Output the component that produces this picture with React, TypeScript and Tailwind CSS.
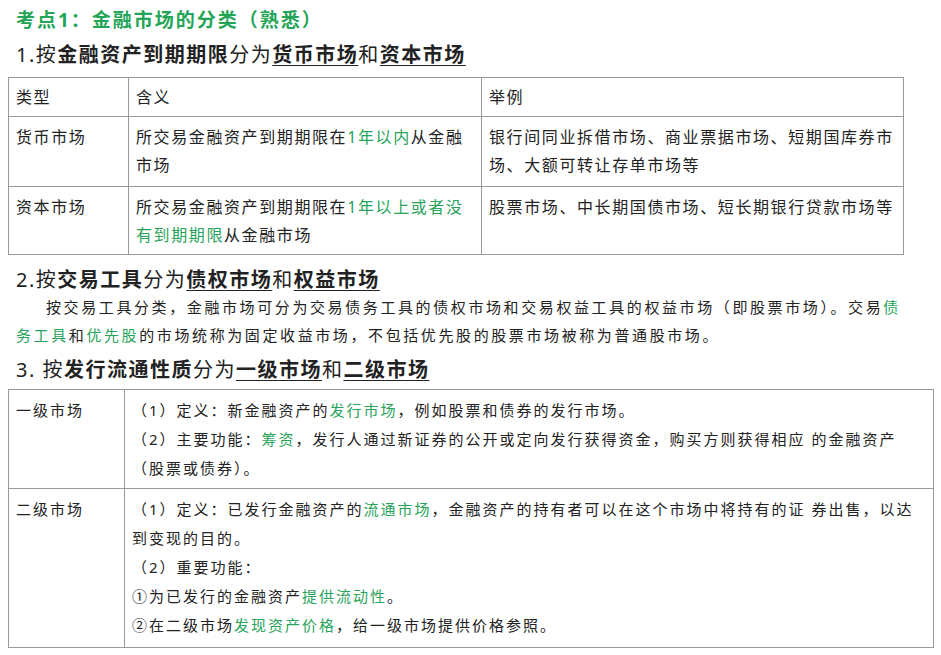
export default function App() {
  const G = ({ children }: { children: React.ReactNode }) => <span className="text-[#27a35a]">{children}</span>;
  const U = ({ children }: { children: React.ReactNode }) => <b className="underline underline-offset-[3px] decoration-1">{children}</b>;
  return (
    <div className="w-[941px] h-[655px] bg-white text-[#222] overflow-hidden" style={{ fontFamily: '"Noto Sans", "Noto Sans CJK SC", sans-serif' }}>
      <div className="pl-[16px] pt-[5px] h-[33px] text-[19px] font-bold text-[#22a556] leading-[30px] tracking-[2px]">考点1：金融市场的分类（熟悉）</div>
      <div className="pl-[16px] h-[44px] text-[20px] leading-[44px] tracking-[1.5px]">1.按<b>金融资产到期期限</b>分为<U>货币市场</U>和<U>资本市场</U></div>
      <table className="ml-[8px] w-[896px] border-collapse text-[16px] leading-[28px] tracking-[1.6px]">
        <colgroup><col className="w-[120px]" /><col className="w-[353px]" /><col /></colgroup>
        <tbody>
          <tr className="h-[39px]">
            <td className="border border-[#999] px-[7px] align-top pt-[5px]">类型</td>
            <td className="border border-[#999] px-[7px] align-top pt-[5px]">含义</td>
            <td className="border border-[#999] px-[7px] align-top pt-[5px]">举例</td>
          </tr>
          <tr className="h-[70px]">
            <td className="border border-[#999] px-[7px] align-top pt-[6px]">货币市场</td>
            <td className="border border-[#999] px-[7px] align-top pt-[6px]">所交易金融资产到期期限在<G>1年以内</G>从金融市场</td>
            <td className="border border-[#999] px-[7px] align-top pt-[6px]">银行间同业拆借市场、商业票据市场、短期国库券市场、大额可转让存单市场等</td>
          </tr>
          <tr className="h-[68px]">
            <td className="border border-[#999] px-[7px] align-top pt-[6px]">资本市场</td>
            <td className="border border-[#999] px-[7px] align-top pt-[6px]">所交易金融资产到期期限在<G>1年以上或者没有到期期限</G>从金融市场</td>
            <td className="border border-[#999] px-[7px] align-top pt-[6px]">股票市场、中长期国债市场、短长期银行贷款市场等</td>
          </tr>
        </tbody>
      </table>
      <div className="pl-[16px] h-[44px] pt-[6px] text-[20px] leading-[38px] tracking-[1.5px]">2.按<b>交易工具</b>分为<U>债权市场</U>和<U>权益市场</U></div>
      <p className="pl-[16px] text-[15px] leading-[28px] indent-[2em] mt-[-6px] w-[912px] tracking-[2.6px]">按交易工具分类，金融市场可分为交易债务工具的债权市场和交易权益工具的权益市场（即股票市场）。交易<G>债务工具</G>和<G>优先股</G>的市场统称为固定收益市场，不包括优先股的股票市场被称为普通股市场。</p>
      <div className="pl-[16px] h-[38px] text-[20px] leading-[38px] mt-[2px] tracking-[1.5px]">3. 按<b>发行流通性质</b>分为<U>一级市场</U>和<U>二级市场</U></div>
      <table className="ml-[8px] w-[926px] border-collapse text-[15px] leading-[29px] tracking-[2px]">
        <colgroup><col className="w-[116px]" /><col /></colgroup>
        <tbody>
          <tr className="h-[99px]">
            <td className="border border-[#999] px-[7px] align-top pt-[6px]">一级市场</td>
            <td className="border border-[#999] px-[7px] align-top pt-[6px]">
              <div>（1）定义：新金融资产的<G>发行市场</G>，例如股票和债券的发行市场。</div>
              <div>（2）主要功能：<G>筹资</G>，发行人通过新证券的公开或定向发行获得资金，购买方则获得相应 的金融资产（股票或债券）。</div>
            </td>
          </tr>
          <tr className="h-[159px]">
            <td className="border border-[#999] px-[7px] align-top pt-[6px]">二级市场</td>
            <td className="border border-[#999] px-[7px] align-top pt-[6px]">
              <div>（1）定义：已发行金融资产的<G>流通市场</G>，金融资产的持有者可以在这个市场中将持有的证 券出售，以达到变现的目的。</div>
              <div>（2）重要功能：</div>
              <div>①为已发行的金融资产<G>提供流动性</G>。</div>
              <div>②在二级市场<G>发现资产价格</G>，给一级市场提供价格参照。</div>
            </td>
          </tr>
        </tbody>
      </table>
    </div>
  );
}
